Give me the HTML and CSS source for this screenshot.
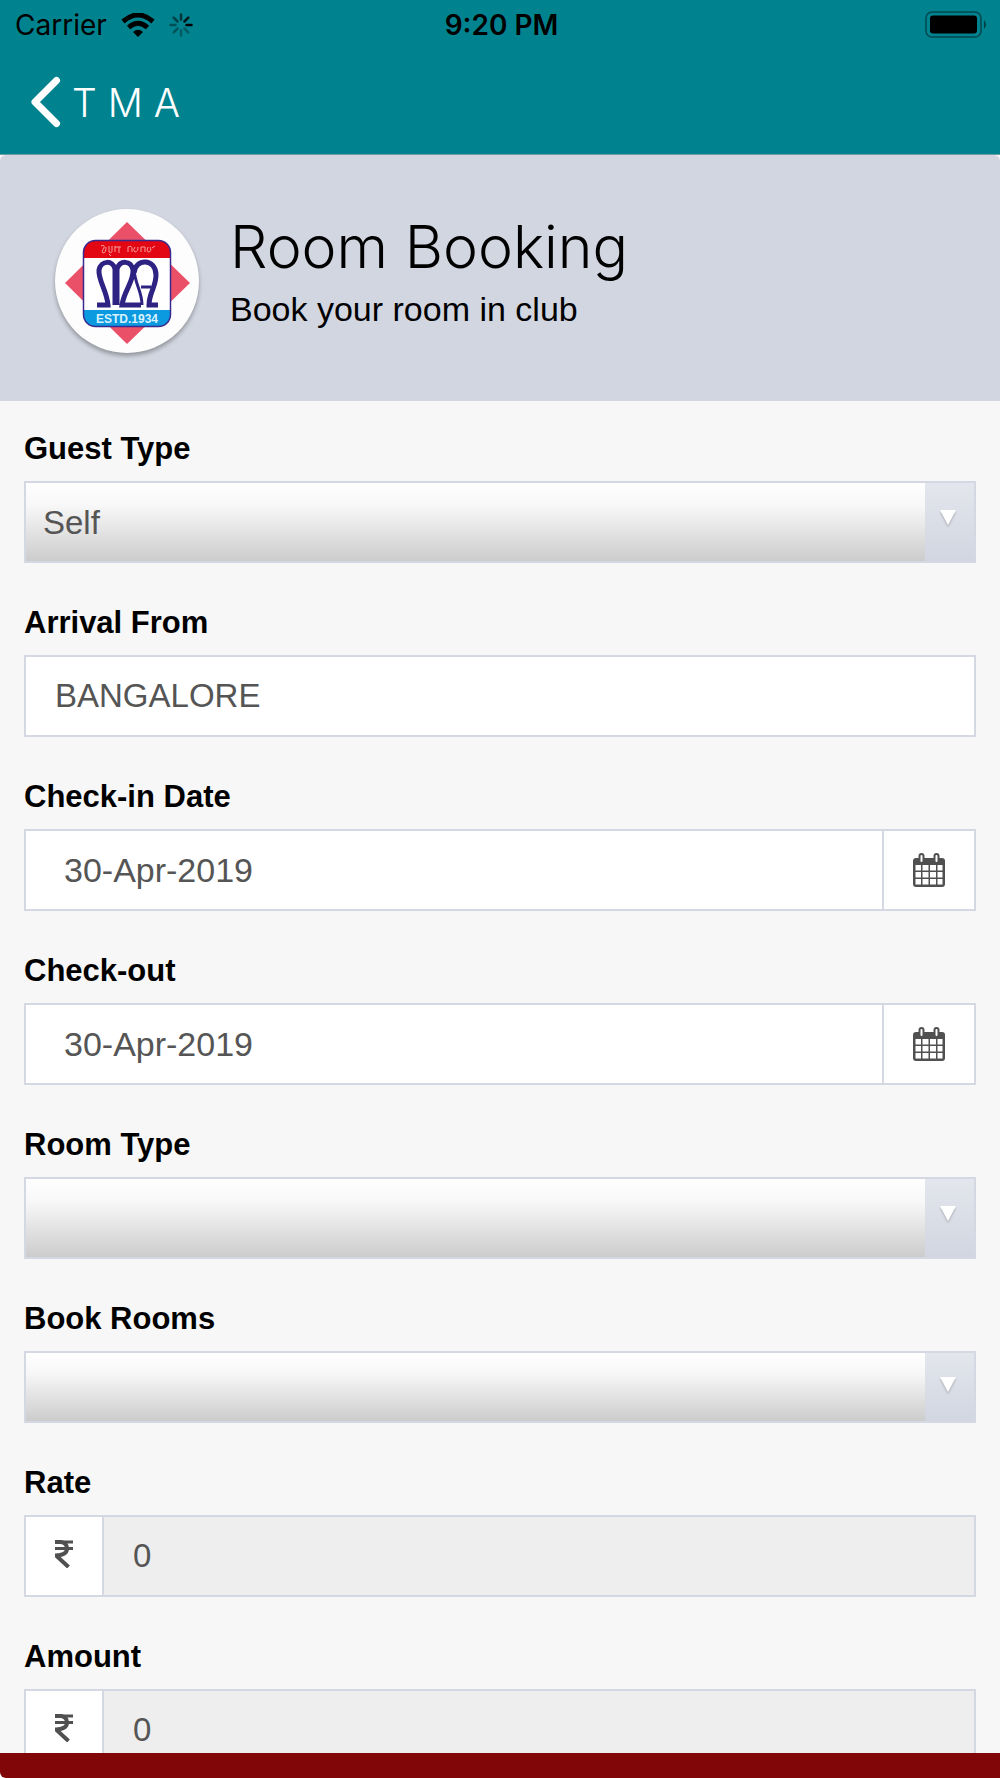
FILE: index.html
```html
<!DOCTYPE html>
<html lang="en">

<head>
    <meta charset="UTF-8">
    <meta name="viewport" content="width=device-width, initial-scale=1">
    <title>Room Booking</title>
    <link rel="stylesheet" href="styles.css">
</head>

<body>
    <header class="header">
        <div class="statusbar">
            <div class="status-left">
                <span class="carrier">Carrier</span>
                <svg class="wifi" width="34" height="25" viewBox="0 0 34 25" fill="none" stroke="#000" stroke-width="5">
                    <path d="M2 8.500Q17 -4.500 32 8.500" />
                    <path d="M7.500 14.500Q17 6 26.500 14.500" />
                    <path d="M12 19Q17 14.500 22 19L17 24Z" fill="#000" stroke="none" />
                </svg>
                <svg class="spinner" width="24" height="24" viewBox="0 0 24 24" stroke="#000" stroke-width="2.500" stroke-linecap="round">
                    <path d="M17.500 12H22.500" />
                    <path d="M15.500 8.500L19.300 4.700" opacity=".8" />
                    <path d="M12 6.500V1.500" opacity=".6" />
                    <path d="M8.500 8.500L4.700 4.700" opacity=".5" />
                    <path d="M6.500 12H1.500" opacity=".4" />
                    <path d="M8.500 15.500L4.700 19.300" opacity=".35" />
                    <path d="M12 17.500V22.500" opacity=".3" />
                    <path d="M15.500 15.500L19.300 19.300" opacity=".3" />
                </svg>
            </div>
            <span class="clock">9:20 PM</span>
            <div class="status-right">
                <svg class="battery" width="64" height="28" viewBox="0 0 64 28">
                    <rect x="2" y="1" width="55" height="25" rx="6" fill="none" stroke="#000" stroke-opacity=".45" stroke-width="1.500" />
                    <rect x="6" y="4.500" width="47" height="18" rx="3" fill="#000" />
                    <path d="M60 9Q64 13.500 60 18Z" fill="#000" fill-opacity=".5" />
                </svg>
            </div>
        </div>
        <nav class="navbar">
            <a href="#" class="back">
                <svg width="32" height="52" viewBox="0 0 32 52" fill="none" stroke="#fff" stroke-width="7" stroke-linecap="round" stroke-linejoin="round">
                    <path d="M26.500 4.500L5 26L26.500 47.500" />
                </svg>
                <span>T M A</span>
            </a>
        </nav>
    </header>

    <main class="content">
        <section class="banner">
            <svg class="logo" viewBox="0 0 144 144">
                <path d="M72 13L135 74L72 135L10 74Z" fill="#ea5068" />
                <rect x="28.500" y="31.500" width="87" height="86" rx="12" fill="#fff" />
                <path d="M28.500 49V43.500a12 12 0 0 1 12-12h63a12 12 0 0 1 12 12V49Z" fill="#e30613" />
                <path d="M28.500 101v4.500a12 12 0 0 0 12 12h63a12 12 0 0 0 12-12V101Z" fill="#0b9ae0" />
                <rect x="28.500" y="31.500" width="87" height="86" rx="12" fill="none" stroke="#3a2a90" stroke-width="1.500" />
                <g fill="none" stroke="#f6a0a0" stroke-width="1">
                    <path d="M46 37q4-2 3 2q-3 4-1 5q3 0 3-6M54 37v6q3 2 3-2v-4M54 45l2 2M60 37v6M60 38h6M64 38v6" />
                    <path d="M73 43v-5q4-2 4 2v3M80 38q-3 3 0 5q3 0 3-5M86 43v-5h4v5M93 38q-2 5 1 5q3-1 1-5M97 39l3-2" />
                </g>
                <g fill="none" stroke="#2e2383" stroke-width="5">
                    <path d="M42 96H53C52 82 43 71 44 61C46 51 58 51 60 60V96" />
                    <path d="M62 96V60C65 51 76 51 78 61C79 72 69 82 67 96H86" />
                    <path d="M79 64C80 49 101 49 101 66C101 78 94 84 94 96H103" />
                    <path d="M79 60C80 76 87 82 87 96M86 78H96" stroke-width="3" />
                </g>
                <text class="logo-year" x="72" y="114" text-anchor="middle">ESTD.1934</text>
            </svg>
            <div>
                <h1>Room Booking</h1>
                <p>Book your room in club</p>
            </div>
        </section>

        <form class="booking-form" action="">
            <div class="form-group">
                <label for="guestType">Guest Type</label>
                <div class="select-box">
                    <select id="guestType">
                        <option>Self</option>
                        <option>Guest</option>
                    </select>
                    <span class="select-arrow">
                        <svg width="18" height="18" viewBox="0 0 18 18"><path d="M1 1H17L9 16Z" fill="#fff" /></svg>
                    </span>
                </div>
            </div>

            <div class="form-group">
                <label for="arrivalFrom">Arrival From</label>
                <div class="input-box">
                    <input type="text" id="arrivalFrom" value="BANGALORE">
                </div>
            </div>

            <div class="form-group">
                <label for="checkIn">Check-in Date</label>
                <div class="input-box">
                    <input type="text" id="checkIn" class="date" value="30-Apr-2019">
                    <button type="button" class="calendar" aria-label="Pick check-in date">
                        <svg width="32" height="34" viewBox="0 0 32 34">
                            <rect x="0" y="5" width="32" height="29" rx="3" fill="#505050" />
                            <path d="M2.500 12h5.500v5.500h-5.500zM9.500 12h6v5.500h-6zM17 12h6v5.500h-6zM24.500 12h5v5.500h-5zM2.500 19h5.500v5.500h-5.500zM9.500 19h6v5.500h-6zM17 19h6v5.500h-6zM24.500 19h5v5.500h-5zM2.500 26h5.500v5.500h-5.500zM9.500 26h6v5.500h-6zM17 26h6v5.500h-6zM24.500 26h5v5.500h-5z" fill="#fff" />
                            <rect x="6.500" y="1" width="4" height="9" rx="2" fill="#fff" stroke="#505050" stroke-width="2" />
                            <rect x="21.500" y="1" width="4" height="9" rx="2" fill="#fff" stroke="#505050" stroke-width="2" />
                        </svg>
                    </button>
                </div>
            </div>

            <div class="form-group">
                <label for="checkOut">Check-out</label>
                <div class="input-box">
                    <input type="text" id="checkOut" class="date" value="30-Apr-2019">
                    <button type="button" class="calendar" aria-label="Pick check-out date">
                        <svg width="32" height="34" viewBox="0 0 32 34">
                            <rect x="0" y="5" width="32" height="29" rx="3" fill="#505050" />
                            <path d="M2.500 12h5.500v5.500h-5.500zM9.500 12h6v5.500h-6zM17 12h6v5.500h-6zM24.500 12h5v5.500h-5zM2.500 19h5.500v5.500h-5.500zM9.500 19h6v5.500h-6zM17 19h6v5.500h-6zM24.500 19h5v5.500h-5zM2.500 26h5.500v5.500h-5.500zM9.500 26h6v5.500h-6zM17 26h6v5.500h-6zM24.500 26h5v5.500h-5z" fill="#fff" />
                            <rect x="6.500" y="1" width="4" height="9" rx="2" fill="#fff" stroke="#505050" stroke-width="2" />
                            <rect x="21.500" y="1" width="4" height="9" rx="2" fill="#fff" stroke="#505050" stroke-width="2" />
                        </svg>
                    </button>
                </div>
            </div>

            <div class="form-group">
                <label for="roomType">Room Type</label>
                <div class="select-box">
                    <select id="roomType"></select>
                    <span class="select-arrow">
                        <svg width="18" height="18" viewBox="0 0 18 18"><path d="M1 1H17L9 16Z" fill="#fff" /></svg>
                    </span>
                </div>
            </div>

            <div class="form-group">
                <label for="bookRooms">Book Rooms</label>
                <div class="select-box short">
                    <select id="bookRooms"></select>
                    <span class="select-arrow">
                        <svg width="18" height="18" viewBox="0 0 18 18"><path d="M1 1H17L9 16Z" fill="#fff" /></svg>
                    </span>
                </div>
            </div>

            <div class="form-group">
                <label for="rate">Rate</label>
                <div class="input-box">
                    <span class="currency">
                        <svg width="18" height="28" viewBox="0 0 18 28" fill="none" stroke="#505050" stroke-width="3">
                            <path d="M0 2H18M0 8.500H18" />
                            <path d="M0 2H6Q12 3 12 8.500Q12 15 1 15.500L13.500 27" stroke-width="4" />
                        </svg>
                    </span>
                    <input type="text" id="rate" value="0" readonly>
                </div>
            </div>

            <div class="form-group">
                <label for="amount">Amount</label>
                <div class="input-box">
                    <span class="currency">
                        <svg width="18" height="28" viewBox="0 0 18 28" fill="none" stroke="#505050" stroke-width="3">
                            <path d="M0 2H18M0 8.500H18" />
                            <path d="M0 2H6Q12 3 12 8.500Q12 15 1 15.500L13.500 27" stroke-width="4" />
                        </svg>
                    </span>
                    <input type="text" id="amount" value="0" readonly>
                </div>
            </div>
        </form>
    </main>

    <footer class="footer"></footer>
</body>

</html>
```
FILE: styles.css
```css
* {
    box-sizing: border-box;
}

body {
    margin: 0;
    height: 100vh;
    display: flex;
    flex-direction: column;
    background-color: #fff;
    font-family: "Liberation Sans", Arial, Helvetica, sans-serif;
    color: #000;
}

/* header */
.header {
    flex: none;
    background-color: #00838f;
    border-bottom: 1px solid #6d9ba6;
}

.statusbar {
    display: grid;
    grid-template-columns: 1fr auto 1fr;
    align-items: center;
    height: 50px;
    padding: 0 12px 0 15px;
    font-family: Inter, sans-serif;
    font-size: 28px;
}

.status-left {
    display: flex;
    align-items: center;
    gap: 14px;
}

.status-right {
    display: flex;
    justify-content: flex-end;
}

.clock {
    font-weight: 600;
}

.navbar {
    display: flex;
    align-items: center;
    height: 104px;
    padding: 0 30px;
}

.back {
    display: flex;
    align-items: center;
    gap: 10px;
    color: #fff;
    font-family: Inter, sans-serif;
    font-size: 39px;
    font-weight: 300;
    text-decoration: none;
}

/* scrolling part */
.content {
    flex: 1;
    min-height: 0;
    overflow-y: auto;
    scrollbar-width: none;
    background-color: #f7f7f7;
}

.banner {
    display: flex;
    gap: 31px;
    height: 246px;
    padding: 54px 55px;
    background-color: #d2d6e0;
    border-radius: 6px 6px 0 0;
}

.logo {
    width: 144px;
    height: 144px;
    border-radius: 50%;
    background-color: #fdfdfd;
    box-shadow: 0 3px 4px rgba(0, 0, 0, 0.3);
}

.logo-year {
    font-size: 12px;
    font-weight: bold;
    fill: #d9f2ff;
}

.banner h1 {
    margin: 0;
    font-family: Inter, sans-serif;
    font-size: 59px;
    font-weight: 300;
    line-height: 76px;
}

.banner p {
    margin: 4px 0 0;
    font-size: 34px;
    line-height: 40px;
}

/* form */
.booking-form {
    padding: 30px 24px;
}

.form-group {
    margin-bottom: 42px;
}

.form-group label {
    display: block;
    margin-bottom: 14px;
    font-size: 31px;
    font-weight: bold;
    line-height: 36px;
}

.input-box,
.select-box {
    display: flex;
    height: 82px;
    border: 2px solid #d4d8e3;
    background-color: #fff;
}

.select-box {
    position: relative;
}

.select-box.short {
    height: 72px;
}

input,
select {
    flex: 1;
    min-width: 0;
    border: none;
    border-radius: 0;
    outline: none;
    font-family: inherit;
    font-size: 33px;
    color: #555;
}

input {
    padding: 0 29px;
    background-color: #fff;
}

input.date {
    padding: 0 38px;
    font-size: 34px;
}

input[readonly] {
    background-color: #eee;
}

select {
    appearance: none;
    padding: 0 17px;
    background: linear-gradient(#fff 0%, #f7f7f7 30%, #ccc 100%);
}

.select-arrow {
    position: absolute;
    top: 0;
    right: 0;
    bottom: 0;
    display: flex;
    justify-content: center;
    width: 49px;
    padding: 26px 4px 0 0;
    background: linear-gradient(#e3e6ec, #d2d6e1);
    pointer-events: none;
}

.short .select-arrow {
    padding-top: 23px;
}

.select-arrow svg {
    filter: drop-shadow(0 2px 1px rgba(0, 0, 0, 0.2));
}

.calendar {
    width: 92px;
    padding: 0;
    border: none;
    border-left: 2px solid #d4d8e3;
    background-color: #fff;
    cursor: pointer;
}

.calendar svg {
    display: block;
    margin: 0 auto;
}

.currency {
    display: flex;
    align-items: center;
    justify-content: center;
    width: 78px;
    padding-bottom: 4px;
    border-right: 2px solid #d4d8e3;
}

/* footer */
.footer {
    flex: none;
    height: 25px;
    background-color: #800608;
    border-bottom-left-radius: 6px;
}
```
